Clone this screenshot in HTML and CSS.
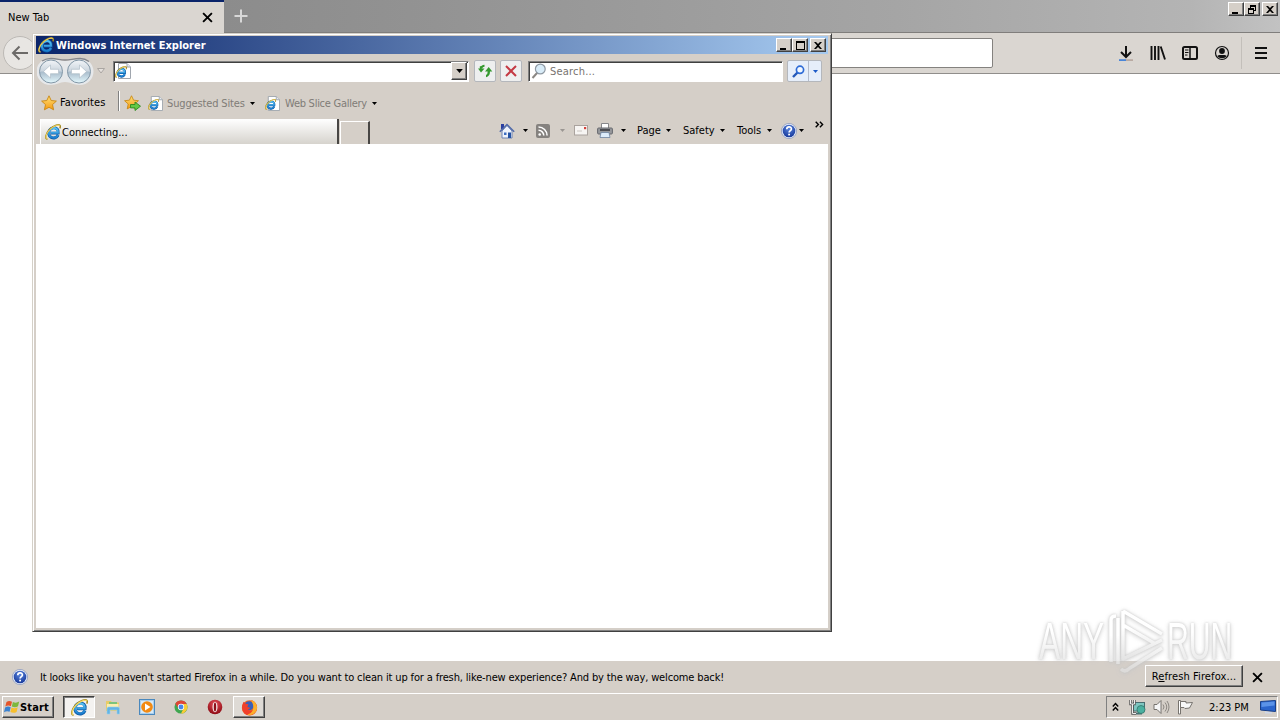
FILE: index.html
```html
<!DOCTYPE html>
<html lang="en">
<head>
    <meta charset="UTF-8">
    <meta name="viewport" content="width=device-width, initial-scale=1.0">
    <title>Desktop</title>
    <link rel="stylesheet" href="styles.css">
</head>
<body>
    <!-- shared icons -->
    <svg class="sprite" width="0" height="0">
        <defs>
            <linearGradient id="gBlue" x1="0" y1="0" x2="0" y2="1">
                <stop offset="0" stop-color="#55c0f2"/><stop offset="1" stop-color="#1c7fd0"/>
            </linearGradient>
            <linearGradient id="gNav" x1="0" y1="0" x2="0" y2="1">
                <stop offset="0" stop-color="#f2f5f8"/><stop offset=".48" stop-color="#cbd5de"/><stop offset=".52" stop-color="#a9bccb"/><stop offset="1" stop-color="#e4f8fd"/>
            </linearGradient>
            <linearGradient id="gStar" x1="0" y1="0" x2="0" y2="1">
                <stop offset="0" stop-color="#ffe278"/><stop offset="1" stop-color="#f59a13"/>
            </linearGradient>
            <linearGradient id="gMark" x1="0" y1="0" x2="0" y2="1">
                <stop offset=".35" stop-color="#fff"/><stop offset="1" stop-color="#dedede"/>
            </linearGradient>
            <radialGradient id="gHelp" cx=".5" cy=".3" r=".7">
                <stop offset="0" stop-color="#5b86de"/><stop offset="1" stop-color="#16389a"/>
            </radialGradient>
            <radialGradient id="gRed" cx=".5" cy=".3" r=".7">
                <stop offset="0" stop-color="#e8515a"/><stop offset="1" stop-color="#8c0812"/>
            </radialGradient>
        </defs>
        <symbol id="ie" viewBox="0 0 16 16">
            <path d="M13.200 11C11.500 14.200 8.500 14.500 6.200 13.400 3.300 12 2.900 8.500 4.600 6 6.500 3.300 10.300 3.200 12.200 5.100c1 1 1.200 2.300 1 4H5.500" fill="none" stroke="#0d5aa6" stroke-width="2.900"/>
            <path d="M13 10.900C11.400 13.800 8.500 14.200 6.300 13.200 3.600 11.800 3.200 8.500 4.800 6.200 6.600 3.700 10.100 3.500 11.900 5.300c.9.900 1.100 2 1 3.500H5.800" fill="none" stroke="url(#gBlue)" stroke-width="2"/>
            <path d="M2.500 15C-.5 15.500.5 9.500 4.500 5.500 8 2 13.500-.3 15 1.500c.5.700.3 1.800-.2 2.800" fill="none" stroke="#a58a24" stroke-width="1.500"/>
            <path d="M2.500 14.800C0 15 .9 9.500 4.700 5.700 8 2.400 13.300.1 14.700 1.700" fill="none" stroke="#f9de6a" stroke-width="1"/>
        </symbol>
        <symbol id="iepage" viewBox="0 0 16 16">
            <path d="M3.500.5H12L15.500 4v11.500h-12z" fill="#fff" stroke="#a0a6ae"/>
            <path d="M12 .5V4h3.500" fill="#e6eaf0" stroke="#a0a6ae"/>
            <use href="#ie" x="0" y="3" width="12" height="12"/>
        </symbol>
        <symbol id="star" viewBox="0 0 16 16">
            <path d="M8 .8l2.200 4.700 5.200.6-3.900 3.500 1.100 5.200L8 12.300l-4.600 2.500 1.100-5.200L.6 6.100l5.200-.6z" fill="url(#gStar)" stroke="#c98712" stroke-width=".9"/>
        </symbol>
        <symbol id="help" viewBox="0 0 16 16">
            <circle cx="8" cy="8" r="7.600" fill="#e6ecf8" stroke="#8494bc" stroke-width=".7"/>
            <circle cx="8" cy="8" r="6.300" fill="url(#gHelp)"/>
            <path d="M5.800 6.200c0-3 4.600-2.900 4.600-.3C10.400 7.700 8.100 7.600 8.100 9.600" fill="none" stroke="#fff" stroke-width="1.700"/>
            <rect x="7.200" y="10.700" width="1.800" height="1.700" fill="#fff"/>
        </symbol>
        <symbol id="drop" viewBox="0 0 5 3"><path d="M0 0h5L2.500 3z" fill="currentColor"/></symbol>
        <symbol id="cross" viewBox="0 0 10 10"><path d="M1 1l8 8M9 1L1 9" fill="none" stroke="currentColor" stroke-width="1.700"/></symbol>
        <symbol id="min" viewBox="0 0 12 10"><path d="M2 7h6v2H2z" fill="#000"/></symbol>
        <symbol id="max" viewBox="0 0 12 10"><path d="M2 0h9v9H2zM3 2v6h7V2z" fill="#000" fill-rule="evenodd"/></symbol>
        <symbol id="restore" viewBox="0 0 12 10"><path d="M4 0h6v6H8v3H2V3h2zM5 2v1h3v2h1V2zM3 5v3h4V5z" fill="#000" fill-rule="evenodd"/></symbol>
        <symbol id="close" viewBox="0 0 12 10"><path d="M2 1h2l2 2 2-2h2L7 4.500 10 8H8L6 6 4 8H2l3-3.500z" fill="#000"/></symbol>
    </svg>

    <div class="firefox">
        <div class="ff-tabs">
            <div class="ff-tab">
                <span class="t-newtab">New Tab</span>
                <svg class="ff-tab-close" width="11" height="11"><use href="#cross"/></svg>
            </div>
            <svg class="ff-plus" width="14" height="14" viewBox="0 0 14 14"><path d="M7 .5v13M.5 7h13" stroke="#d8d8d8" stroke-width="2"/></svg>
            <div class="win-buttons ff-win">
                <button><svg width="12" height="10"><use href="#min"/></svg></button>
                <button><svg width="12" height="10"><use href="#restore"/></svg></button>
                <button class="last"><svg width="12" height="10"><use href="#close"/></svg></button>
            </div>
        </div>
        <div class="ff-toolbar">
            <div class="ff-back"><svg width="18" height="16" viewBox="0 0 18 16"><path d="M17 8H2M8.500 1.500L2 8l6.500 6.500" fill="none" stroke="#6c6a68" stroke-width="2"/></svg></div>
            <div class="ff-url"></div>
            <div class="ff-icons">
                <svg width="16" height="17" viewBox="0 0 16 17"><path d="M8 1v10.500M3 7l5 5 5-5" fill="none" stroke="#111" stroke-width="2"/><path d="M1 14.200h7v1.800H1z" fill="#4a86d8"/><path d="M8 14.200h7v1.800H8z" fill="#b9aaa2"/></svg>
                <svg width="16" height="16" viewBox="0 0 16 16"><path d="M1.500 1v14M5 1v14M8.500 1v14M10.700 1.500l4.300 13" fill="none" stroke="#111" stroke-width="1.900"/></svg>
                <svg width="16" height="16" viewBox="0 0 16 16"><rect x="1" y="2" width="14" height="12" rx="1.500" fill="none" stroke="#111" stroke-width="2"/><path d="M8 2v12" stroke="#111" stroke-width="1.500"/><path d="M3 5h3.500M3 7.500h3.500M3 10h2.500" stroke="#111"/></svg>
                <svg width="16" height="16" viewBox="0 0 16 16"><circle cx="8" cy="8" r="6.500" fill="none" stroke="#111" stroke-width="1.200"/><circle cx="8" cy="6" r="2.900" fill="#111"/><path d="M3.300 11c1.200-1.300 2.700-1 4.700-1s3.500-.3 4.700 1c-2 3-7.400 3-9.400 0z" fill="#111"/></svg>
                <i class="ff-sep"></i>
                <svg width="14" height="14" viewBox="0 0 14 14"><path d="M1 2h12M1 7h12M1 12h12" stroke="#111" stroke-width="2"/></svg>
            </div>
        </div>
        <div class="ff-page"></div>
        <div class="ff-notice">
            <svg width="16" height="16"><use href="#help"/></svg>
            <span class="t-notice">It looks like you haven't started Firefox in a while. Do you want to clean it up for a fresh, like-new experience? And by the way, welcome back!</span>
            <button class="refresh"><span class="t-refresh">R<u>e</u>fresh Firefox...</span></button>
            <svg class="notice-close" width="11" height="11"><use href="#cross"/></svg>
        </div>
    </div>

    <div class="taskbar">
        <button class="start">
            <svg width="16" height="16" viewBox="0 0 16 16"><path d="M2.500 3C4.500 1.500 6 1.700 8 2.700L6.900 7.200C5 6.200 3.300 6.400 1.300 7.600z" fill="#e5552a"/><path d="M8.900 3c2 .9 4 1 6.300-.4L14 7.200c-2 1.300-4.100 1.100-6.200.2z" fill="#7db83c"/><path d="M1.100 8.500c2-1.300 3.700-1.200 5.600-.3l-1.100 4.600c-2-1-3.700-.8-5.600.5z" fill="#3b82d0"/><path d="M7.500 8.500c2 .9 4 1 6.200-.3l-1.100 4.700c-2.200 1.300-4.200 1.100-6.200.2z" fill="#f7bf2d"/></svg>
            <span class="t-start">Start</span>
        </button>
        <div class="tasks">
            <div class="task pressed"><svg width="17" height="17"><use href="#ie"/></svg></div>
            <div class="task"><svg width="16" height="16" viewBox="0 0 16 16"><path d="M1 2h5l1 1.500h7V12H1z" fill="#e9cc68"/><path d="M2 5h11.500v6H2z" fill="#faeeb0"/><path d="M4 3h8v2H4z" fill="#7cc47c"/><path d="M2 15V9.500Q2 8 3.500 8h9.500Q14.500 8 14.500 9.500V15H12v-4H5v4z" fill="#63b4e4" stroke="#98d2f0" stroke-width=".6"/></svg></div>
            <div class="task"><svg width="16" height="16" viewBox="0 0 16 16"><rect x=".5" y=".5" width="15" height="15" fill="#a9cfee" stroke="#4a88bd"/><rect x="2" y="2" width="12" height="12" fill="#d7eaf8"/><circle cx="8" cy="8" r="5.800" fill="#f28a13"/><path d="M6 4.500L11.500 8 6 11.500z" fill="#fff"/></svg></div>
            <div class="task"><svg width="14" height="14" viewBox="0 0 16 16"><circle cx="8" cy="8" r="7.500" fill="#3fa650"/><path d="M1.500 4.300A7.500 7.500 0 0 1 14.500 4.500H8L5 9.500z" fill="#df4536"/><path d="M14.500 4.500A7.500 7.500 0 0 1 8 15.500L11 9.500 10 4.500z" fill="#f9cc35"/><circle cx="8" cy="8" r="3.600" fill="#fff"/><circle cx="8" cy="8" r="2.800" fill="#4786e8"/></svg></div>
            <div class="task"><svg width="16" height="16" viewBox="0 0 16 16"><circle cx="8" cy="8" r="7.300" fill="url(#gRed)"/><ellipse cx="8" cy="8" rx="2.500" ry="5.300" fill="#f4e4e4"/><ellipse cx="8" cy="8" rx="1.200" ry="4.600" fill="#8c1018"/></svg></div>
            <div class="task raised"><svg width="17" height="17" viewBox="0 0 16 16"><circle cx="8" cy="8.300" r="7.200" fill="#f2681f"/><circle cx="7.600" cy="6.400" r="4.300" fill="#3a5fb8"/><path d="M1 8C1 5 2 3.500 2.500 2.500L4.500 4.500 7 5 6 7.500l2.500.8C8 10 6.500 10 6.500 10c2 1.800 5 1 6.200-1.500C13.500 5 11 3 9 1c4 .5 6.300 4 6.100 7.500-.3 3.500-3 6.700-7.100 6.800C4 15.300 1 12 1 8z" fill="#f0402c"/><path d="M9 1c4 .5 6.300 4 6.100 7.500-.2 2.500-1.600 4.600-3.700 5.800-2 1-4 .8-5.400.2C12 13.500 13.500 6 9 1z" fill="#fbb02c"/></svg></div>
        </div>
        <div class="tray">
            <svg width="7" height="10" viewBox="0 0 7 10"><path d="M.8 4.500l2.700-3 2.700 3M.8 8.500l2.700-3 2.700 3" fill="none" stroke="#000" stroke-width="1.400"/></svg>
            <svg class="tray-net" width="17" height="16" viewBox="0 0 17 16"><rect x="4.500" y="3.500" width="11" height="8.500" fill="#7ec6c0" stroke="#486c70"/><path d="M7 14.500h6" stroke="#486c70" stroke-width="2"/><circle cx="12" cy="10.500" r="4" fill="#4bb0a0" stroke="#33766c" stroke-width=".8"/><path d="M1.500 1v4h4V1M3.500 5v9.500H7" fill="none" stroke="#555" stroke-width="2.400"/><path d="M1.500 1v4h4V1M3.500 5v9.500H7" fill="none" stroke="#eee" stroke-width="1"/></svg>
            <svg class="tray-vol" width="17" height="16" viewBox="0 0 17 16"><path d="M1 5.500h3L8 1.500v13L4 10.500H1z" fill="#f6f6f6" stroke="#77736e"/><path d="M10 5.500q2 2.500 0 5M12 3.500q3.500 4.500 0 9M14 2q4 6 0 12" fill="none" stroke="#8b8782"/></svg>
            <svg class="tray-flag" width="17" height="16" viewBox="0 0 17 16"><path d="M1.500 1.500h2v13.500h-2z" fill="#fff" stroke="#77736e"/><path d="M3.500 2.500h5.500v1.500l6.500-.5-3 5.500-4.500.5-1-1H3.500z" fill="#f8f8f8" stroke="#77736e"/></svg>
            <span class="t-clock">2:23 PM</span>
            <svg class="tray-desk" width="16" height="14" viewBox="0 0 16 14"><path d="M.5 1.500L15.500.5v11L.5 10z" fill="#2b65cc" stroke="#183f88"/><path d="M1.500 2.500L14.500 1.500v4L1.500 7z" fill="#5b93e8"/><path d="M5 11.500l7 .8v1.200H5z" fill="#cfd8e8"/></svg>
        </div>
    </div>

    <div class="ie-window">
        <div class="ie-title">
            <svg width="16" height="16"><use href="#ie"/></svg>
            <span class="t-title">Windows Internet Explorer</span>
            <div class="win-buttons">
                <button><svg width="12" height="10"><use href="#min"/></svg></button>
                <button><svg width="12" height="10"><use href="#max"/></svg></button>
                <button class="last"><svg width="12" height="10"><use href="#close"/></svg></button>
            </div>
        </div>
        <div class="ie-nav">
            <svg class="travel" width="57" height="29" viewBox="0 0 57 29">
                <path d="M13 1C22 1 22 4 28 4S35 1 43 1a13.500 13.500 0 0 1 0 27C36 28 34 25 28 25s-7 3-15 3A13.500 13.500 0 0 1 13 1z" fill="#e6e8ea"/>
                <path d="M5 4C9 1.500 11 1.500 14 1.500 21 1.500 22 3 28 3S36 1.500 43 1.500c3 0 5 0 9 3" fill="none" stroke="#86878c" stroke-width="1.300"/>
                <circle cx="14" cy="14.500" r="11.500" fill="url(#gNav)" stroke="#8296a6"/>
                <circle cx="42" cy="14.500" r="11.500" fill="url(#gNav)" stroke="#8296a6"/>
                <path d="M6.500 14.500L13.500 8v4.300H21.500v4.400h-8V21z" fill="#fff" stroke="#b2bfc9" stroke-width=".7"/>
                <path d="M49.500 14.500L42.500 8v4.300h-8v4.400h8V21z" fill="#fff" stroke="#b2bfc9" stroke-width=".7"/>
            </svg>
            <svg class="recent" width="8" height="6" viewBox="0 0 8 6"><path d="M.5.5h7L4 5z" fill="#e4e0dc" stroke="#aaa6a2"/></svg>
            <div class="address">
                <svg width="16" height="16"><use href="#iepage"/></svg>
                <button class="combo"><svg width="7" height="4"><use href="#drop"/></svg></button>
            </div>
            <div class="nav-btn refresh-btn"><svg width="16" height="14" viewBox="0 0 16 14"><path d="M1 5.500L4.500 1.500 7.500 5.500H5.700v2.300h-2V5.500z" fill="#35992f" transform="rotate(180 4.250 5)"/><path d="M3.300 3.500Q4 1.200 7.500.8v2Q5.500 3 5.300 4.500z" fill="#35992f"/><path d="M8 7.500L11.700 3 15.300 7.500H13Q13 12 9 13.200V11Q10.700 10.500 10.700 7.500z" fill="#35992f"/></svg></div>
            <div class="nav-btn stop-btn"><svg width="12" height="12" viewBox="0 0 12 12"><path d="M1 1l10 10M11 1L1 11" stroke="#c43a44" stroke-width="2"/></svg></div>
            <div class="search">
                <svg width="16" height="16" viewBox="0 0 16 16"><path d="M6.500 9.500L1.500 15" stroke="#8b8783" stroke-width="2"/><circle cx="9.300" cy="6" r="4.900" fill="#d9ecf8" stroke="#8e98a2" stroke-width="1.200"/></svg>
                <span class="t-search">Search...</span>
            </div>
            <div class="go">
                <span class="go-find"><svg width="13" height="13" viewBox="0 0 13 13"><path d="M5.500 7.500L1 12" stroke="#2458b8" stroke-width="2.400"/><circle cx="8" cy="4.800" r="3.600" fill="#f2f8ff" stroke="#2e6bd6" stroke-width="1.700"/></svg></span>
                <span class="go-more"><svg width="5" height="3"><use href="#drop"/></svg></span>
            </div>
        </div>
        <div class="ie-favs">
            <svg width="16" height="16"><use href="#star"/></svg>
            <span class="t-favs">Favorites</span>
            <i class="fav-sep"></i>
            <svg width="17" height="16" viewBox="0 0 17 16"><use href="#star" width="15" height="15"/><path d="M6.500 9.500h4.500V7l5.500 4.200-5.500 4.300v-2.600H6.500z" fill="#65c846" stroke="#2e8a20" stroke-width=".9"/></svg>
            <svg class="fav-page" width="15" height="15"><use href="#iepage"/></svg>
            <span class="t-sites">Suggested Sites</span>
            <svg width="5" height="3"><use href="#drop"/></svg>
            <svg class="fav-page second" width="15" height="15"><use href="#iepage"/></svg>
            <span class="t-slice">Web Slice Gallery</span>
            <svg width="5" height="3"><use href="#drop"/></svg>
        </div>
        <div class="ie-tabs">
            <div class="ie-tab">
                <svg width="16" height="16"><use href="#ie"/></svg>
                <span class="t-conn">Connecting...</span>
            </div>
            <div class="ie-newtab"></div>
            <div class="commands">
                <svg class="c-home" width="16" height="16" viewBox="0 0 16 16"><path d="M2 1h3v5H2z" fill="#2a3ea0"/><path d="M3 8l5-5.500L13 8v7H3z" fill="#eef3fc" stroke="#6f84b4"/><path d="M.8 8.800L8 1.500l7.200 7.300" fill="none" stroke="#506aa8" stroke-width="1.500"/><path d="M9 9.500h3V15H9z" fill="#2452a4"/><path d="M5 9.500h2.500V12H5z" fill="#3c6cc0"/></svg>
                <svg class="d1" width="5" height="3"><use href="#drop"/></svg>
                <svg class="c-rss" width="14" height="14" viewBox="0 0 14 14"><rect width="14" height="14" rx="2" fill="#85827f"/><circle cx="3.700" cy="10.500" r="1.300" fill="#fff"/><path d="M2.500 6.300a5.300 5.300 0 0 1 5.300 5.300M2.500 3a8.600 8.600 0 0 1 8.600 8.600" fill="none" stroke="#fff" stroke-width="1.500"/></svg>
                <svg class="d2" width="5" height="3"><use href="#drop"/></svg>
                <svg class="c-mail" width="14" height="11" viewBox="0 0 14 11"><rect x=".5" y=".5" width="13" height="9.500" fill="#f7f5f3" stroke="#aaa39e"/><path d="M10 2h2.200v2.200H10z" fill="#d4423c"/><path d="M3 6h5" stroke="#ccc7c2"/></svg>
                <svg class="c-print" width="16" height="15" viewBox="0 0 16 15"><path d="M4.500.5h7V6h-7z" fill="#fff" stroke="#87878a"/><rect x=".6" y="5" width="14.800" height="6" rx="1" fill="#96989c" stroke="#66686e"/><path d="M3 7h10" stroke="#33353a" stroke-width="1.500"/><path d="M4 9.500h8l1 5H3z" fill="#ddecfa" stroke="#6f84a0" stroke-width=".8"/></svg>
                <svg class="d3" width="5" height="3"><use href="#drop"/></svg>
                <span class="t-page">Page</span><svg class="d4" width="5" height="3"><use href="#drop"/></svg>
                <span class="t-safety">Safety</span><svg class="d4" width="5" height="3"><use href="#drop"/></svg>
                <span class="t-tools">Tools</span><svg class="d4" width="5" height="3"><use href="#drop"/></svg>
                <svg class="c-help" width="16" height="16"><use href="#help"/></svg>
                <svg class="d5" width="5" height="3"><use href="#drop"/></svg>
                <svg class="c-more" width="9" height="7" viewBox="0 0 9 7"><path d="M.7.8l2.700 2.700L.7 6.200M4.900.8l2.700 2.700-2.700 2.700" fill="none" stroke="#000" stroke-width="1.400"/></svg>
            </div>
        </div>
        <div class="ie-page"></div>
    </div>

    <svg class="watermark" width="240" height="76" viewBox="0 0 240 76">
        <g class="wm">
            <text transform="translate(4 55) scale(.61 1)">ANY</text>
            <text transform="translate(132 55) scale(.58 1)">RUN</text>
            <path d="M88 7L127 30M88 7v48L127 36M88 21L119 39" stroke-width="3.500"/>
            <path d="M76 58V16q0-4 5-4M83 60V14M86 65q4 4 9-1l32-20" stroke-width="3.500"/>
        </g>
    </svg>
</body>
</html>
```
FILE: styles.css
```css
* {
    box-sizing: border-box;
}

body {
    margin: 0;
    width: 1280px;
    height: 720px;
    overflow: hidden;
    position: relative;
    display: flex;
    flex-direction: column;
    background: #fff;
    color: #000;
    font-family: "DejaVu Sans Condensed", "DejaVu Sans", sans-serif;
    font-stretch: condensed;
    font-size: 11px;
    line-height: 14px;
}

svg {
    display: block;
    flex: none;
}

span {
    white-space: nowrap;
    flex: none;
}

button {
    font: inherit;
    color: inherit;
    padding: 0;
    margin: 0;
    border-radius: 0;
    background: #d5cfc8;
    border: 1px solid;
    border-color: #fff #404040 #404040 #fff;
    box-shadow: inset -1px -1px #808080;
}

.sprite {
    position: absolute;
}

/* Firefox */
.firefox {
    flex: 1;
    display: flex;
    flex-direction: column;
}

.ff-tabs {
    height: 33px;
    display: flex;
    background: linear-gradient(90deg, #858585, #919191 30%, #a5a5a5 70%, #b4b4b4 93%, #c2c2c2);
    border-bottom: 1px solid #807e7c;
}

.ff-tab {
    width: 224px;
    height: 33px;
    display: flex;
    align-items: center;
    padding: 0 11px 1px 8px;
    background: #dad6d1;
    border-top: 2px solid #0a246a;
}

.t-newtab {
    margin-top: 1px;
}

.ff-tab-close {
    margin-left: auto;
}

.ff-plus {
    margin: 9px 0 0 10px;
}

.win-buttons {
    display: flex;
    margin-left: auto;
}

.win-buttons button {
    width: 16px;
    height: 14px;
    padding: 1px 0 0 1px;
}

.win-buttons .last {
    margin-left: 2px;
}

.ff-win {
    margin-top: 2px;
    margin-right: 2px;
}

.ff-toolbar {
    height: 41px;
    display: flex;
    align-items: center;
    background: #dad6d1;
    border-bottom: 1px solid #908e8b;
}

.ff-back {
    width: 34px;
    height: 34px;
    margin-left: 3px;
    padding: 8px 7px;
    border: 1px solid #bcb9b5;
    border-radius: 50%;
    background: #e8e6e3;
}

.ff-url {
    width: 753px;
    height: 30px;
    margin-left: 203px;
    background: #fff;
    border: 1px solid #84827f;
    border-radius: 2px;
}

.ff-icons {
    display: flex;
    align-items: center;
    gap: 16px;
    margin-left: auto;
    padding-right: 12px;
}

.ff-sep {
    width: 1px;
    height: 32px;
    margin: 0 -4px 0 -5px;
    background: #c3bfba;
}

.ff-page {
    flex: 1;
}

.ff-notice {
    height: 32px;
    display: flex;
    align-items: center;
    padding: 0 17px 0 12px;
    background: #d5cfc8;
}

.t-notice {
    margin: 2px 0 0 12px;
    letter-spacing: -0.145px;
}

.refresh {
    width: 98px;
    height: 22px;
    padding-top: 1px;
    margin-left: auto;
    margin-bottom: 2px;
}

.t-refresh {
    letter-spacing: 0.1px;
}

.notice-close {
    margin-left: 9px;
}

/* Taskbar */
.taskbar {
    height: 27px;
    display: flex;
    background: #d5cfc8;
    border-top: 1px solid #fff;
    padding: 2px 2px 0;
}

.start {
    width: 52px;
    height: 22px;
    display: flex;
    align-items: center;
    padding-left: 1px;
    font-weight: bold;
}

.t-start {
    margin-top: 1px;
    letter-spacing: 0.15px;
}

.tasks {
    display: flex;
    margin-left: 9px;
    gap: 2px;
}

.task {
    width: 32px;
    height: 22px;
    display: flex;
    align-items: center;
    justify-content: center;
}

.pressed {
    background: #f4f2f0;
    border: 1px solid;
    border-color: #404040 #fff #fff #404040;
    box-shadow: inset 1px 1px #808080;
}

.raised {
    background: #dedad5;
    border: 1px solid;
    border-color: #fff #404040 #404040 #fff;
    box-shadow: inset -1px -1px #808080;
}

.tray {
    width: 172px;
    height: 22px;
    display: flex;
    align-items: center;
    margin-left: auto;
    padding-left: 5px;
    border: 1px solid;
    border-color: #808080 #fff #fff #808080;
}

.tray-net {
    margin-left: 10px;
}

.tray-vol {
    margin-left: 7px;
}

.tray-flag {
    margin-left: 7px;
}

.t-clock {
    width: 40px;
    margin: 1px 0 0 15px;
}

.tray-desk {
    margin-left: 11px;
}

/* Internet Explorer window */
.ie-window {
    position: absolute;
    left: 32px;
    top: 33px;
    width: 800px;
    height: 599px;
    padding: 2px 3px;
    display: flex;
    flex-direction: column;
    background: #d5cfc8;
    border: 1px solid;
    border-color: #d4d0c8 #404040 #404040 #d4d0c8;
    box-shadow: inset 1px 1px #fff, inset -1px -1px #808080;
}

.ie-title {
    height: 18px;
    width: 792px;
    display: flex;
    align-items: center;
    padding: 0 2px;
    color: #fff;
    font-weight: bold;
    background: linear-gradient(90deg, #0a246a, #a6caf0);
}

.t-title {
    margin: 1px 0 0 2px;
}

.ie-nav {
    height: 34px;
    display: flex;
    align-items: center;
    padding-left: 1px;
}

.recent {
    margin-left: 3px;
}

.address {
    width: 356px;
    height: 21px;
    display: flex;
    align-items: center;
    justify-content: space-between;
    margin-left: 8px;
    padding-left: 1px;
    background: #fff;
    border: 1px solid;
    border-color: #808080 #fff #fff #808080;
    box-shadow: inset 1px 1px #404040;
}

.combo {
    width: 16px;
    height: 18px;
    margin-right: 1px;
    padding-left: 4px;
}

.nav-btn {
    width: 22px;
    height: 22px;
    display: flex;
    align-items: center;
    justify-content: center;
    margin-left: 5px;
    background: #eeefef;
    border: 1px solid #b4b7bc;
    border-radius: 2px;
}

.stop-btn {
    margin-left: 4px;
}

.search {
    width: 255px;
    height: 21px;
    display: flex;
    align-items: center;
    margin-left: 6px;
    padding-left: 2px;
    background: #fff;
    border: 1px solid;
    border-color: #808080 #fff #fff #808080;
    box-shadow: inset 1px 1px #404040;
}

.t-search {
    margin: 2px 0 0 3px;
    letter-spacing: 0.2px;
    color: #77736f;
}

.go {
    width: 35px;
    height: 22px;
    display: flex;
    margin-left: 4px;
    background: #e6eefa;
    border: 1px solid #b4b7bc;
    border-radius: 2px;
    color: #1c5ac8;
}

.go-find, .go-more {
    display: flex;
    align-items: center;
    justify-content: center;
}

.go-find {
    width: 21px;
    border-right: 1px solid #b4bccc;
}

.go-more {
    width: 12px;
}

.ie-favs {
    height: 30px;
    display: flex;
    align-items: center;
    padding-left: 5px;
}

.t-favs {
    width: 46px;
    margin-left: 3px;
    letter-spacing: 0.1px;
}

.fav-sep {
    width: 2px;
    height: 20px;
    margin: 0 4px 4px 12px;
    border-left: 1px solid #808080;
    border-right: 1px solid #fff;
}

.fav-page {
    margin-left: 7px;
}

.second {
    margin-left: 10px;
}

.t-sites, .t-slice {
    color: #807c77;
    margin-top: 1px;
}

.t-sites {
    width: 78px;
    margin-left: 4px;
    margin-right: 5px;
    letter-spacing: -0.15px;
}

.t-slice {
    width: 82px;
    margin-left: 5px;
    margin-right: 5px;
    letter-spacing: -0.26px;
}

.ie-tabs {
    height: 26px;
    display: flex;
    align-items: flex-end;
    padding-left: 4px;
}

.ie-tab {
    width: 299px;
    height: 25px;
    display: flex;
    align-items: center;
    padding-left: 4px;
    background: linear-gradient(#fff, #d6d3cd);
    border-left: 1px solid #fff;
    border-right: 2px solid #484644;
}

.t-conn {
    margin: 2px 0 0 1px;
}

.ie-newtab {
    width: 30px;
    height: 23px;
    margin-left: 1px;
    border: 1px solid #fff;
    border-right: 2px solid #484644;
    border-bottom: 0;
}

.commands {
    height: 26px;
    flex: 1;
    display: flex;
    align-items: center;
    padding-bottom: 1px;
}

.c-home { margin-left: 129px; }
.d1 { margin-left: 8px; }
.c-rss { margin-left: 8px; }
.d2 { margin-left: 10px; color: #9a9692; }
.c-mail { margin-left: 9px; }
.c-print { margin-left: 9px; }
.d3 { margin-left: 8px; }
.t-page { width: 25px; margin-left: 11px; }
.d4 { margin-left: 4px; }
.t-safety { width: 33px; margin-left: 12px; }
.t-tools { width: 26px; margin-left: 12px; }
.c-help { margin-left: 9px; }
.d5 { margin-left: 2px; }
.c-more { margin: 0 0 12px 11px; }

.ie-page {
    width: 792px;
    flex: 1;
    margin-bottom: 1px;
    background: #fff;
}

/* Watermark */
.watermark {
    position: absolute;
    left: 1035px;
    top: 604px;
    opacity: .8;
}

.wm {
    fill: url(#gMark);
    font-family: "Liberation Sans", sans-serif;
    font-size: 52px;
    filter: drop-shadow(0 0 1px #c4c4c4) drop-shadow(0 1px 2px #c8c8c8);
}

.wm path {
    fill: none;
    stroke: url(#gMark);
    stroke-linejoin: round;
}
```
